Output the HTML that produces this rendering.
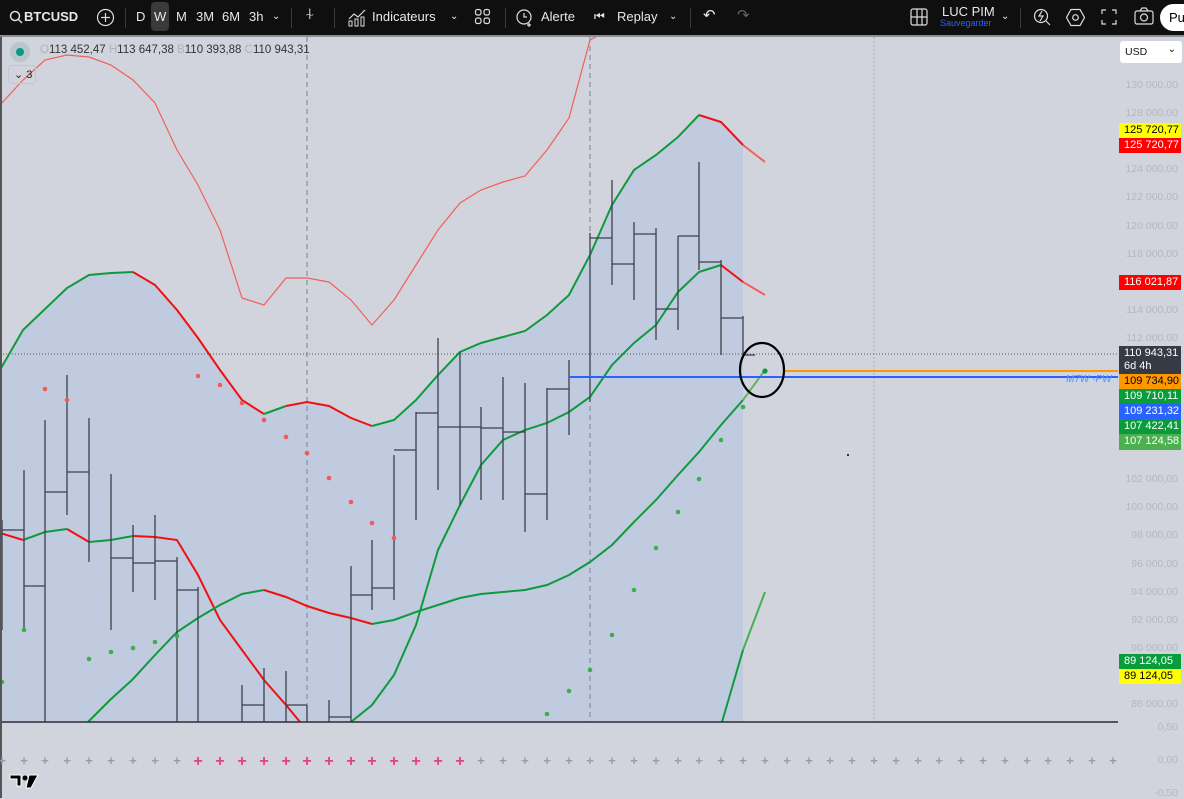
<!DOCTYPE html>
<html><head><meta charset="utf-8"><style>
*{margin:0;padding:0;box-sizing:border-box}
body{width:1184px;height:798px;overflow:hidden;background:#d1d4dc;font-family:"Liberation Sans",sans-serif;position:relative}
.tb{position:absolute;left:0;top:0;width:1184px;height:35px;background:#0f0f0f;color:#e8e8e8;font-size:13px}
.tb span{position:absolute;top:9px;white-space:nowrap}
.sep{position:absolute;top:8px;width:1px;height:20px;background:#3a3a3a}
.ax{position:absolute;right:6px;font-size:10.5px;color:#b4b7c0;text-align:right}
.lb{position:absolute;left:1119px;width:62px;height:15px;font-size:11px;line-height:15px;padding-left:5px;color:#fff}
</style></head><body>
<div class="tb">
<svg style="position:absolute;left:9px;top:10px" width="14" height="14"><circle cx="6" cy="6" r="4.5" fill="none" stroke="#ddd" stroke-width="1.5"/><line x1="9.5" y1="9.5" x2="13" y2="13" stroke="#ddd" stroke-width="1.5"/></svg>
<span style="left:24px;font-weight:bold">BTCUSD</span>
<svg style="position:absolute;left:96px;top:8px" width="19" height="19"><circle cx="9.5" cy="9.5" r="8" fill="none" stroke="#ddd" stroke-width="1.2"/><path d="M9.5 5v9M5 9.5h9" stroke="#ddd" stroke-width="1.2"/></svg>
<div class="sep" style="left:125px"></div>
<span style="left:136px">D</span>
<div style="position:absolute;left:151px;top:2px;width:18px;height:29px;background:#3a3a3a;border-radius:4px"></div>
<span style="left:154px">W</span><span style="left:176px">M</span><span style="left:196px">3M</span><span style="left:222px">6M</span><span style="left:249px">3h</span><span style="left:272px;font-size:10px;top:11px">⌄</span>
<div class="sep" style="left:291px"></div>
<span style="left:305px;font-size:16px;top:6px">⍭</span>
<div class="sep" style="left:334px"></div>
<svg style="position:absolute;left:347px;top:7px" width="20" height="20"><path d="M2 12l5-5 4 3 7-7" fill="none" stroke="#ddd" stroke-width="1.2"/><rect x="2" y="14" width="3" height="5" fill="none" stroke="#ddd"/><rect x="8" y="12" width="3" height="7" fill="none" stroke="#ddd"/><rect x="14" y="10" width="3" height="9" fill="none" stroke="#ddd"/></svg>
<span style="left:372px">Indicateurs</span><span style="left:450px;font-size:10px;top:11px">⌄</span>
<svg style="position:absolute;left:474px;top:8px" width="18" height="18"><g fill="none" stroke="#ddd" stroke-width="1.2"><rect x="1.5" y="1.5" width="5.5" height="5.5" rx="2"/><rect x="10" y="1.5" width="5.5" height="5.5" rx="2"/><rect x="1.5" y="10" width="5.5" height="5.5" rx="2"/><rect x="10" y="10" width="5.5" height="5.5" rx="2"/></g></svg>
<div class="sep" style="left:505px"></div>
<svg style="position:absolute;left:515px;top:7px" width="20" height="20"><circle cx="9" cy="10" r="7" fill="none" stroke="#ddd" stroke-width="1.2"/><path d="M9 6v4h3M14 16v4M12 18h4" stroke="#ddd" stroke-width="1.2" fill="none"/></svg>
<span style="left:541px">Alerte</span>
<span style="left:594px;font-size:12px">⏮</span><span style="left:617px">Replay</span><span style="left:669px;font-size:10px;top:11px">⌄</span>
<div class="sep" style="left:690px"></div>
<span style="left:703px;font-size:15px;top:6px">↶</span><span style="left:737px;font-size:15px;top:6px;color:#666">↷</span>
<svg style="position:absolute;left:910px;top:8px" width="18" height="18"><g fill="none" stroke="#ddd" stroke-width="1.2"><rect x="1" y="1" width="16" height="16" rx="2"/><path d="M1 9h16M7 1v16M12 1v16"/></g></svg>
<span style="left:942px;top:4px;font-size:13px">LUC PIM</span>
<span style="left:940px;top:18px;font-size:9px;color:#2962ff">Sauvegarder</span>
<span style="left:1001px;font-size:10px;top:11px">⌄</span>
<div class="sep" style="left:1020px"></div>
<svg style="position:absolute;left:1032px;top:7px" width="20" height="20"><circle cx="9" cy="9" r="6.5" fill="none" stroke="#ddd" stroke-width="1.2"/><path d="M14 14l4 4M10 4l-3 5h4l-3 5" fill="none" stroke="#ddd" stroke-width="1.2"/></svg>
<svg style="position:absolute;left:1066px;top:8px" width="19" height="19"><path d="M5 1.5h9l4.5 8-4.5 8h-9l-4.5-8z" fill="none" stroke="#ddd" stroke-width="1.2"/><circle cx="9.5" cy="9.5" r="2.8" fill="none" stroke="#ddd" stroke-width="1.2"/></svg>
<svg style="position:absolute;left:1101px;top:9px" width="16" height="16"><path d="M1 5V1h4M11 1h4v4M15 11v4h-4M5 15H1v-4" fill="none" stroke="#ddd" stroke-width="1.2"/></svg>
<svg style="position:absolute;left:1134px;top:7px" width="20" height="19"><rect x="1" y="4" width="18" height="13" rx="2" fill="none" stroke="#ddd" stroke-width="1.2"/><path d="M6 4l2-3h4l2 3" fill="none" stroke="#ddd" stroke-width="1.2"/><circle cx="10" cy="10.5" r="3.5" fill="none" stroke="#ddd" stroke-width="1.2"/></svg>
<div style="position:absolute;left:1160px;top:4px;width:40px;height:27px;border-radius:14px;background:#fff;color:#000;font-size:13px;padding:6px 0 0 9px">Pu</div>
</div>
<div style="position:absolute;left:0;top:35px;width:1184px;height:2px;background:#8a8d94"></div>

<svg style="position:absolute;left:0;top:37px" width="1184" height="761" viewBox="0 37 1184 761">
<rect x="0" y="37" width="1184" height="761" fill="#d1d4dc"/>
<polygon fill="#c1cbe0" points="2,370 23,330 67,288 89,275 111,273 133,272 155,285 177,310 198,338 220,370 242,400 264,414 286,406 307,402 329,406 351,418 372,426 394,420 416,400 438,375 460,352 481,343 503,337 525,331 547,315 569,295 590,255 612,205 634,170 656,155 678,137 699,115 721,122 743,145 743,722 2,722"/>
<line x1="307" y1="37" x2="307" y2="722" stroke="#7d8089" stroke-dasharray="5,4"/>
<line x1="590" y1="37" x2="590" y2="722" stroke="#7d8089" stroke-dasharray="5,4"/>
<line x1="874" y1="37" x2="874" y2="722" stroke="#a8abb3" stroke-dasharray="2,2"/>
<line x1="0" y1="354" x2="1118" y2="354" stroke="#555" stroke-dasharray="1,2"/>
<polyline fill="none" stroke="#f0605a" stroke-width="1.2" points="0,105 23,80 45,60 67,55 89,57 111,65 133,80 155,103 177,150 198,185 220,230 242,298 264,305 286,278 307,278 329,282 351,300 372,325 394,300 416,265 438,230 460,203 481,190 503,182 525,176 547,150 569,118 590,40 597,36"/>
<g fill="none" stroke-width="2">
<polyline stroke="#0e9a3c" points="0,370 23,330 67,288 89,275 111,273 133,272"/>
<polyline stroke="#f01010" points="133,272 155,285 177,310 198,338 220,370 242,400 264,414"/>
<polyline stroke="#0e9a3c" points="264,414 286,406"/>
<polyline stroke="#f01010" points="286,406 307,402 329,406 351,418 372,426"/>
<polyline stroke="#0e9a3c" points="372,426 394,420 416,400 438,375 460,352 481,343 503,337 525,331 547,315 569,295 590,255 612,205 634,170 656,155 678,137 699,115"/>
<polyline stroke="#f01010" points="699,115 721,122 743,145"/>
<polyline stroke="#f06060" points="743,145 765,162"/>
<polyline stroke="#f01010" points="0,533 23,540"/>
<polyline stroke="#0e9a3c" points="23,540 45,532 67,529"/>
<polyline stroke="#f01010" points="67,529 89,542"/>
<polyline stroke="#0e9a3c" points="89,542 111,540 133,536"/>
<polyline stroke="#f01010" points="133,536 155,537 177,540 198,575 220,620 242,650 264,680 286,705 300,722"/>
<polyline stroke="#0e9a3c" points="351,722 372,705 394,675 416,625 438,550 460,505 481,465 503,440 525,430 547,423 569,412 590,397 612,365 634,343 656,325 678,292 699,272 721,265"/>
<polyline stroke="#f01010" points="721,265 743,282"/>
<polyline stroke="#f06060" points="743,282 765,295"/>
<polyline stroke="#0e9a3c" points="88,722 110,700 132,680 155,655 177,632 198,618 220,605 242,594 264,590"/>
<polyline stroke="#f01010" points="264,590 286,597 307,606 329,613 351,618 372,624"/>
<polyline stroke="#0e9a3c" points="372,624 394,620 416,612 438,605 460,598 481,594 503,592 525,590 547,585 569,575 590,562 612,545 634,522 656,500 678,475 699,452 721,425 743,400"/>
<polyline stroke="#5cb85c" points="743,400 765,370"/>
<polyline stroke="#0e9a3c" points="722,722 743,650"/>
<polyline stroke="#3fb24f" points="743,650 765,592"/>
</g>
<g stroke="#3c3f48" stroke-width="1.3">
<path d="M2 520V630M2 530H24M24 470V630M24 586H45M45 420V722M45 492H67M67 375V515M67 472H89M89 418V562M111 474V630M111 558H133M133 525V592M133 563H155M155 515V600M155 561H177M177 557V722M177 590H198M198 587V722M242 685V722M242 705H264M264 668V722M286 671V722M286 705H307M307 705V722M329 700V722M329 717H351M351 566V722M351 595H372M372 540V610M372 588H394M394 455V600M394 450H416M416 412V520M416 413H438M438 338V490M438 427H460M460 352V505M460 427H481M481 407V500M481 428H503M503 377V500M503 432H525M525 383V532M525 494H547M547 388V520M547 389H569M569 360V435M569 377H590M590 233V402M590 238H612M612 180V285M612 264H634M634 222V300M634 234H656M656 228V340M656 309H678M678 236V330M678 236H699M699 162V270M699 262H721M721 260V355M721 318H743M743 316V355M743 355H755"/>
</g>
<g fill="#f25a5a"><circle cx="45" cy="389" r="2.3"/><circle cx="67" cy="400" r="2.3"/><circle cx="198" cy="376" r="2.3"/><circle cx="220" cy="385" r="2.3"/><circle cx="242" cy="403" r="2.3"/><circle cx="264" cy="420" r="2.3"/><circle cx="286" cy="437" r="2.3"/><circle cx="307" cy="453" r="2.3"/><circle cx="329" cy="478" r="2.3"/><circle cx="351" cy="502" r="2.3"/><circle cx="372" cy="523" r="2.3"/><circle cx="394" cy="538" r="2.3"/></g>
<g fill="#3fae4a"><circle cx="2" cy="682" r="2.3"/><circle cx="24" cy="630" r="2.3"/><circle cx="89" cy="659" r="2.3"/><circle cx="111" cy="652" r="2.3"/><circle cx="133" cy="648" r="2.3"/><circle cx="155" cy="642" r="2.3"/><circle cx="177" cy="636" r="2.3"/><circle cx="547" cy="714" r="2.3"/><circle cx="569" cy="691" r="2.3"/><circle cx="590" cy="670" r="2.3"/><circle cx="612" cy="635" r="2.3"/><circle cx="634" cy="590" r="2.3"/><circle cx="656" cy="548" r="2.3"/><circle cx="678" cy="512" r="2.3"/><circle cx="699" cy="479" r="2.3"/><circle cx="721" cy="440" r="2.3"/><circle cx="743" cy="407" r="2.3"/><circle cx="765" cy="371" r="2.6" fill="#0e9a3c"/></g>
<line x1="569" y1="377" x2="1118" y2="377" stroke="#2962ff" stroke-width="2"/>
<line x1="785" y1="371" x2="1118" y2="371" stroke="#ff9800" stroke-width="2"/>
<text x="1066" y="382" font-size="10" fill="#4a90ff" font-style="italic">M7W -PW</text>
<ellipse cx="762" cy="370" rx="22" ry="27" fill="none" stroke="#000" stroke-width="2.2"/>
<circle cx="848" cy="455" r="1" fill="#000"/>
<line x1="0" y1="722" x2="1118" y2="722" stroke="#2a2d33" stroke-width="1.5"/>
<line x1="1" y1="37" x2="1" y2="798" stroke="#555" stroke-width="2"/>
<g font-size="13" font-weight="bold" text-anchor="middle">
<text x="2" y="765" fill="#9a9da5">+</text><text x="24" y="765" fill="#9a9da5">+</text><text x="45" y="765" fill="#9a9da5">+</text><text x="67" y="765" fill="#9a9da5">+</text><text x="89" y="765" fill="#9a9da5">+</text><text x="111" y="765" fill="#9a9da5">+</text><text x="133" y="765" fill="#9a9da5">+</text><text x="155" y="765" fill="#9a9da5">+</text><text x="177" y="765" fill="#9a9da5">+</text>
<text x="198" y="766" fill="#e8417a" font-size="16">+</text><text x="220" y="766" fill="#e8417a" font-size="16">+</text><text x="242" y="766" fill="#e8417a" font-size="16">+</text><text x="264" y="766" fill="#e8417a" font-size="16">+</text><text x="286" y="766" fill="#e8417a" font-size="16">+</text><text x="307" y="766" fill="#e8417a" font-size="16">+</text><text x="329" y="766" fill="#e8417a" font-size="16">+</text><text x="351" y="766" fill="#e8417a" font-size="16">+</text><text x="372" y="766" fill="#e8417a" font-size="16">+</text><text x="394" y="766" fill="#e8417a" font-size="16">+</text><text x="416" y="766" fill="#e8417a" font-size="16">+</text><text x="438" y="766" fill="#e8417a" font-size="16">+</text><text x="460" y="766" fill="#e8417a" font-size="16">+</text>
<text x="481" y="765" fill="#9a9da5">+</text><text x="503" y="765" fill="#9a9da5">+</text><text x="525" y="765" fill="#9a9da5">+</text><text x="547" y="765" fill="#9a9da5">+</text><text x="569" y="765" fill="#9a9da5">+</text><text x="590" y="765" fill="#9a9da5">+</text><text x="612" y="765" fill="#9a9da5">+</text><text x="634" y="765" fill="#9a9da5">+</text><text x="656" y="765" fill="#9a9da5">+</text><text x="678" y="765" fill="#9a9da5">+</text><text x="699" y="765" fill="#9a9da5">+</text><text x="721" y="765" fill="#9a9da5">+</text><text x="743" y="765" fill="#9a9da5">+</text><text x="765" y="765" fill="#9a9da5">+</text><text x="787" y="765" fill="#9a9da5">+</text><text x="809" y="765" fill="#9a9da5">+</text><text x="830" y="765" fill="#9a9da5">+</text><text x="852" y="765" fill="#9a9da5">+</text><text x="874" y="765" fill="#9a9da5">+</text><text x="896" y="765" fill="#9a9da5">+</text><text x="918" y="765" fill="#9a9da5">+</text><text x="939" y="765" fill="#9a9da5">+</text><text x="961" y="765" fill="#9a9da5">+</text><text x="983" y="765" fill="#9a9da5">+</text><text x="1005" y="765" fill="#9a9da5">+</text><text x="1027" y="765" fill="#9a9da5">+</text><text x="1048" y="765" fill="#9a9da5">+</text><text x="1070" y="765" fill="#9a9da5">+</text><text x="1092" y="765" fill="#9a9da5">+</text><text x="1113" y="765" fill="#9a9da5">+</text>
</g>
<g transform="translate(10,775)"><path d="M0 0h11v11h-4v-7h-7z" fill="#000" stroke="#fff" stroke-width="1"/><circle cx="15" cy="3" r="2.5" fill="#000"/><path d="M19 0h9l-7 13h-5z" fill="#000" stroke="#fff" stroke-width="1"/></g>
</svg>

<div style="position:absolute;left:10px;top:42px;width:20px;height:20px;border-radius:50%;background:#b8c7cc"></div>
<div style="position:absolute;left:16px;top:48px;width:8px;height:8px;border-radius:50%;background:#089981"></div>
<div style="position:absolute;left:40px;top:44px;font-size:11.5px;color:#333;white-space:nowrap"><span style="color:#b0b3bb">O</span>113 452,47 <span style="color:#b0b3bb">H</span>113 647,38 <span style="color:#b0b3bb">B</span>110 393,88 <span style="color:#b0b3bb">C</span>110 943,31</div>
<div style="position:absolute;left:8px;top:65px;width:28px;height:19px;border:1px solid #c4c7cf;border-radius:3px;font-size:11px;color:#222;padding:2px 0 0 5px">⌄ 3</div>

<div style="position:absolute;left:1120px;top:41px;width:62px;height:22px;background:#fff;border-radius:3px;font-size:10.5px;color:#111;padding:5px 0 0 5px">USD<span style="position:absolute;right:6px;top:3px;font-size:10px">⌄</span></div>
<div class="ax" style="top:79px">130 000,00</div>
<div class="ax" style="top:107px">128 000,00</div>
<div class="ax" style="top:163px">124 000,00</div>
<div class="ax" style="top:191px">122 000,00</div>
<div class="ax" style="top:220px">120 000,00</div>
<div class="ax" style="top:248px">118 000,00</div>
<div class="ax" style="top:304px">114 000,00</div>
<div class="ax" style="top:332px">112 000,00</div>
<div class="ax" style="top:473px">102 000,00</div>
<div class="ax" style="top:501px">100 000,00</div>
<div class="ax" style="top:529px">98 000,00</div>
<div class="ax" style="top:558px">96 000,00</div>
<div class="ax" style="top:586px">94 000,00</div>
<div class="ax" style="top:614px">92 000,00</div>
<div class="ax" style="top:642px">90 000,00</div>
<div class="ax" style="top:698px">86 000,00</div>
<div class="ax" style="top:721px">0,50</div>
<div class="ax" style="top:754px">0,00</div>
<div class="ax" style="top:787px">-0,50</div>
<div class="lb" style="top:123px;background:#ffff00;color:#000">125 720,77</div>
<div class="lb" style="top:138px;background:#ff0000">125 720,77</div>
<div class="lb" style="top:275px;background:#ff0000">116 021,87</div>
<div class="lb" style="top:346px;height:28px;background:#363a45;line-height:13px;padding-top:1px">110 943,31<br>6d 4h</div>
<div class="lb" style="top:374px;background:#ff9800;color:#000">109 734,90</div>
<div class="lb" style="top:389px;background:#089d3a">109 710,11</div>
<div class="lb" style="top:404px;background:#2962ff">109 231,32</div>
<div class="lb" style="top:419px;background:#089d3a">107 422,41</div>
<div class="lb" style="top:434px;height:16px;background:#4caf50">107 124,58</div>
<div class="lb" style="top:654px;background:#089d3a">89 124,05</div>
<div class="lb" style="top:669px;background:#ffff00;color:#000">89 124,05</div>
</body></html>
